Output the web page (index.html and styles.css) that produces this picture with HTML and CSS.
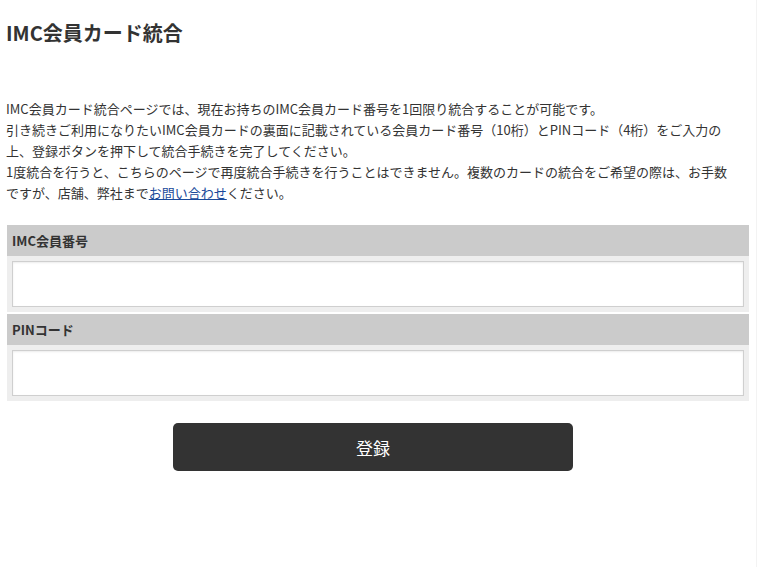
FILE: index.html
```html
<!DOCTYPE html>
<html lang="ja">
<head>
<meta charset="utf-8">
<title>IMC会員カード統合</title>
<link rel="stylesheet" href="styles.css">
</head>
<body>
<div class="page">
  <h1 class="title">IMC会員カード統合</h1>
  <p class="intro">IMC会員カード統合ページでは、現在お持ちのIMC会員カード番号を1回限り統合することが可能です。<br>引き続きご利用になりたいIMC会員カードの裏面に記載されている会員カード番号（10桁）とPINコード（4桁）をご入力の<br>上、登録ボタンを押下して統合手続きを完了してください。<br>1度統合を行うと、こちらのページで再度統合手続きを行うことはできません。複数のカードの統合をご希望の際は、お手数<br>ですが、店舗、弊社まで<a class="link" href="#">お問い合わせ</a>ください。</p>
  <form class="form">
    <div class="field">
      <label class="label" for="imc">IMC会員番号</label>
      <div class="input-wrap"><input class="input" id="imc" type="text"></div>
    </div>
    <div class="field">
      <label class="label" for="pin">PINコード</label>
      <div class="input-wrap"><input class="input" id="pin" type="text"></div>
    </div>
    <div class="actions">
      <button class="submit" type="button">登録</button>
    </div>
  </form>
</div>
</body>
</html>
```

FILE: styles.css
```css
html, body {
  margin: 0;
  padding: 0;
  background: #fff;
}
body {
  font-family: "Noto Sans CJK JP", "Noto Sans", sans-serif;
  color: #333;
}
.page {
  width: 757px;
  min-height: 567px;
  border-right: 1px solid #f3f3f3;
  box-sizing: border-box;
  padding: 0 0 0 6px;
}
.title {
  margin: 0;
  padding-top: 20px;
  font-size: 20px;
  line-height: 26px;
  font-weight: bold;
  color: #333;
}
.intro {
  margin: 52px 0 0 0;
  font-size: 13px;
  line-height: 21px;
  color: #333;
  white-space: nowrap;
}
.link {
  color: #1a4a9a;
  text-decoration: underline;
}
.form {
  margin: 22px 0 0 1px;
  width: 742px;
  display: flex;
  flex-direction: column;
  gap: 2px;
}
.field {
  display: flex;
  flex-direction: column;
}
.label {
  display: block;
  background: #cbcbcb;
  height: 31px;
  line-height: 31px;
  padding: 0 5px;
  font-size: 13px;
  font-weight: bold;
  color: #333;
}
.input-wrap {
  background: #eeeeee;
  padding: 5px;
}
.input {
  display: block;
  width: 100%;
  height: 46px;
  box-sizing: border-box;
  border: 1px solid #cfcfcf;
  box-shadow: inset 0 1px 2px rgba(0,0,0,0.08);
  background: #fff;
  margin: 0;
  padding: 0 8px;
  font-size: 14px;
  font-family: inherit;
}
.actions {
  display: flex;
  justify-content: center;
  padding-top: 20px;
  padding-right: 10px;
}
.submit {
  width: 400px;
  height: 48px;
  border: none;
  border-radius: 5px;
  background: #333;
  color: #fff;
  font-size: 17px;
  font-family: inherit;
}
```
